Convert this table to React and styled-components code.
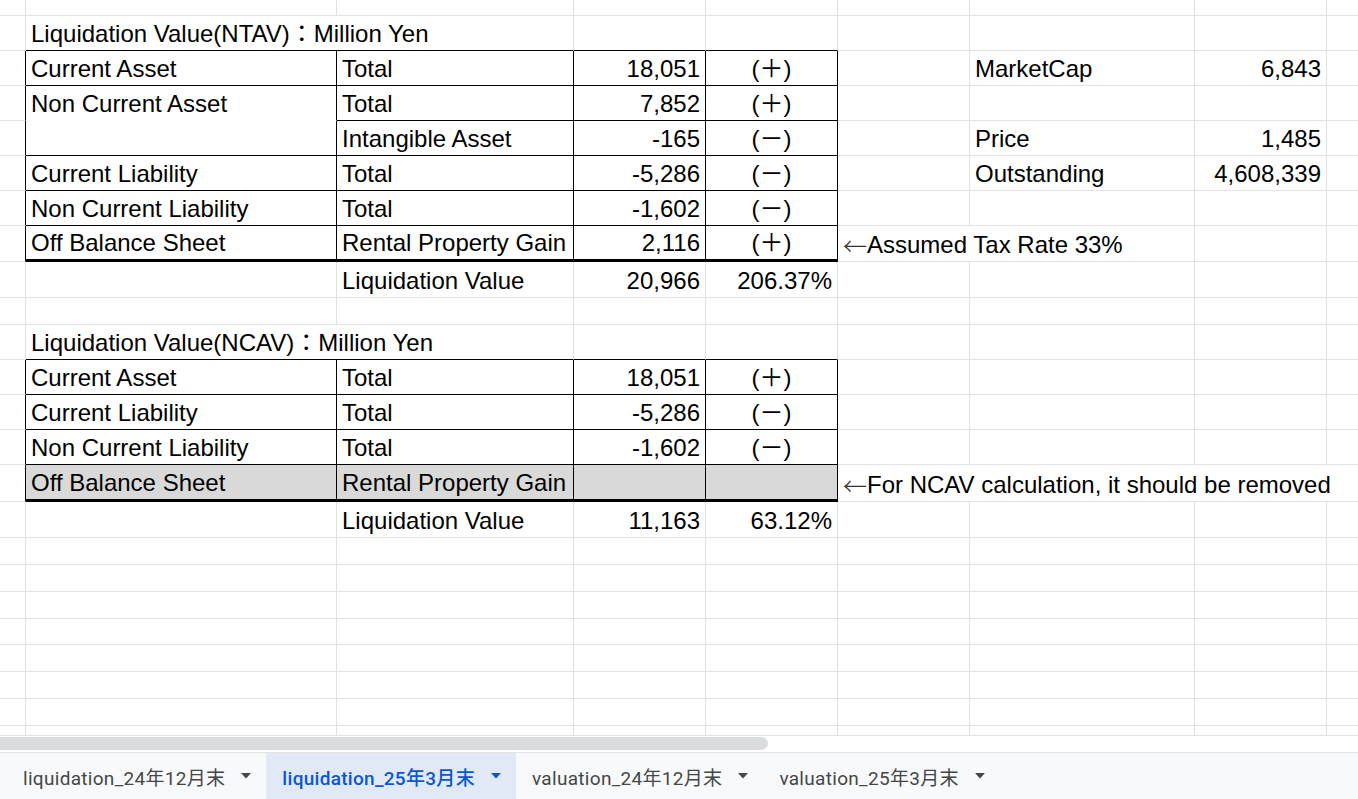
import React from "react";
import styled, { createGlobalStyle } from "styled-components";

const GRID = "#e2e2e2";
const BORDERS = { grid: GRID, line: "#000", none: "transparent" };
const COLUMNS = "26px 311px 237px 132px 132px 132px 225px 132px 100px";

const GlobalStyle = createGlobalStyle`
  * { box-sizing: border-box; }
  html, body { margin: 0; padding: 0; background: #fff; overflow: hidden; }
`;

const Page = styled.div`
  width: 1358px;
  height: 799px;
  display: flex;
  flex-direction: column;
  overflow: hidden;
  font-family: "Liberation Sans", "Noto Sans CJK JP", sans-serif;
  color: #000;
`;

const Sheet = styled.div`
  flex: none;
  overflow: hidden;
`;

const SheetRow = styled.div`
  display: grid;
  grid-template-columns: ${COLUMNS};
  height: ${(props) => props.$h}px;
`;

const Cell = styled.div`
  grid-column: span ${(props) => props.$span || 1};
  display: flex;
  align-items: flex-end;
  justify-content: ${(props) =>
    props.$align === "right"
      ? "flex-end"
      : props.$align === "center"
      ? "center"
      : "flex-start"};
  min-width: 0;
  padding: 0 5px 3px;
  border-right: 1px solid ${(props) => BORDERS[props.$br || "grid"]};
  border-bottom: ${(props) =>
    props.$bb === "thick"
      ? "3px solid #000"
      : `1px solid ${BORDERS[props.$bb || "grid"]}`};
  background: ${(props) => props.$bg || "transparent"};
  font-size: 24px;
  line-height: 26px;
  white-space: nowrap;
`;

// the note arrow is a full-width glyph in the sheet
const Arrow = styled.span`
  font-family: "Noto Sans CJK JP", sans-serif;
  font-weight: 300;
  color: #333;
`;

const ScrollTrack = styled.div`
  flex: none;
  height: 16px;
  padding-top: 1px;
`;

const ScrollThumb = styled.div`
  width: 768px;
  height: 13px;
  background: #dadce0;
  border-radius: 0 7px 7px 0;
`;

const TabBar = styled.div`
  flex: 1;
  display: flex;
  align-items: stretch;
  padding-left: 7px;
  background: #f8f9fa;
  border-top: 1px solid #e3e3e3;
`;

const Tab = styled.div`
  display: flex;
  align-items: center;
  gap: 16px;
  height: 46px;
  padding: 0 15px 0 16px;
  background: ${(props) => (props.$active ? "#e1e9f7" : "transparent")};
  color: ${(props) => (props.$active ? "#0b57d0" : "#444746")};
  font-family: Roboto, "Noto Sans CJK JP", sans-serif;
  font-size: 19px;
  font-weight: ${(props) => (props.$active ? 500 : 400)};
  letter-spacing: 0.3px;
  white-space: nowrap;
`;

const Caret = ({ color }) => (
  <svg width="10" height="6" viewBox="0 0 10 6">
    <path d="M0 0h10L5 5.5z" fill={color} />
  </svg>
);

const Note = ({ children }) => (
  <>
    <Arrow>←</Arrow>
    {children}
  </>
);

const L = "line";
const blank = (n) => Array.from({ length: n }, () => ({}));

// one bordered row of a liquidation table (columns A..E)
const tableCells = ({ label = "", item = "", value = "", sign = "", labelBottom, bottom = L, bg }) => [
  { br: L },
  { t: label, br: L, bb: labelBottom || bottom, bg },
  { t: item, br: L, bb: bottom, bg },
  { t: value, br: L, bb: bottom, align: "right", bg },
  { t: sign, br: L, bb: bottom, align: "center", bg },
];

const titleCells = (title) => [{}, { t: title, span: 2, bb: L }, { bb: L }, { bb: L }];

const resultCells = (value, ratio) => [
  {},
  {},
  { t: "Liquidation Value" },
  { t: value, align: "right" },
  { t: ratio, align: "right" },
];

const side = (label, value) => [{}, { t: label }, { t: value, align: "right" }, {}];

const rows = [
  { h: 16, cells: blank(9) },
  { h: 35, cells: [...titleCells("Liquidation Value(NTAV)：Million Yen"), ...blank(4)] },
  {
    h: 35,
    cells: [
      ...tableCells({ label: "Current Asset", item: "Total", value: "18,051", sign: "(＋)" }),
      ...side("MarketCap", "6,843"),
    ],
  },
  {
    h: 35,
    cells: [
      ...tableCells({ label: "Non Current Asset", item: "Total", value: "7,852", sign: "(＋)", labelBottom: "none" }),
      ...blank(4),
    ],
  },
  {
    h: 35,
    cells: [
      ...tableCells({ item: "Intangible Asset", value: "-165", sign: "(－)" }),
      ...side("Price", "1,485"),
    ],
  },
  {
    h: 35,
    cells: [
      ...tableCells({ label: "Current Liability", item: "Total", value: "-5,286", sign: "(－)" }),
      ...side("Outstanding", "4,608,339"),
    ],
  },
  {
    h: 35,
    cells: [
      ...tableCells({ label: "Non Current Liability", item: "Total", value: "-1,602", sign: "(－)" }),
      ...blank(4),
    ],
  },
  {
    h: 36,
    cells: [
      ...tableCells({ label: "Off Balance Sheet", item: "Rental Property Gain", value: "2,116", sign: "(＋)", bottom: "thick" }),
      { t: <Note>Assumed Tax Rate 33%</Note>, span: 2 },
      {},
      {},
    ],
  },
  { h: 36, cells: [...resultCells("20,966", "206.37%"), ...blank(4)] },
  { h: 27, cells: blank(9) },
  { h: 35, cells: [...titleCells("Liquidation Value(NCAV)：Million Yen"), ...blank(4)] },
  {
    h: 35,
    cells: [
      ...tableCells({ label: "Current Asset", item: "Total", value: "18,051", sign: "(＋)" }),
      ...blank(4),
    ],
  },
  {
    h: 35,
    cells: [
      ...tableCells({ label: "Current Liability", item: "Total", value: "-5,286", sign: "(－)" }),
      ...blank(4),
    ],
  },
  {
    h: 35,
    cells: [
      ...tableCells({ label: "Non Current Liability", item: "Total", value: "-1,602", sign: "(－)" }),
      ...blank(4),
    ],
  },
  {
    h: 37,
    cells: [
      ...tableCells({ label: "Off Balance Sheet", item: "Rental Property Gain", bottom: "thick", bg: "#d9d9d9" }),
      { t: <Note>For NCAV calculation, it should be removed</Note>, span: 4 },
    ],
  },
  { h: 36, cells: [...resultCells("11,163", "63.12%"), ...blank(4)] },
  ...[27, 27, 27, 26, 27, 27, 27, 10].map((h) => ({ h, cells: blank(9) })),
];

const tabs = [
  { name: "liquidation_24年12月末" },
  { name: "liquidation_25年3月末", active: true },
  { name: "valuation_24年12月末" },
  { name: "valuation_25年3月末" },
];

const App = () => {
  return (
    <Page>
      <GlobalStyle />
      <Sheet>
        {rows.map((row, i) => (
          <SheetRow key={`row-${i}`} $h={row.h}>
            {row.cells.map((cell, j) => (
              <Cell
                key={`cell-${i}-${j}`}
                $span={cell.span}
                $align={cell.align}
                $br={cell.br}
                $bb={cell.bb}
                $bg={cell.bg}
              >
                {cell.t}
              </Cell>
            ))}
          </SheetRow>
        ))}
      </Sheet>
      <ScrollTrack>
        <ScrollThumb />
      </ScrollTrack>
      <TabBar>
        {tabs.map((tab) => (
          <Tab key={tab.name} $active={tab.active}>
            {tab.name}
            <Caret color={tab.active ? "#0b57d0" : "#444746"} />
          </Tab>
        ))}
      </TabBar>
    </Page>
  );
};

export default App;
